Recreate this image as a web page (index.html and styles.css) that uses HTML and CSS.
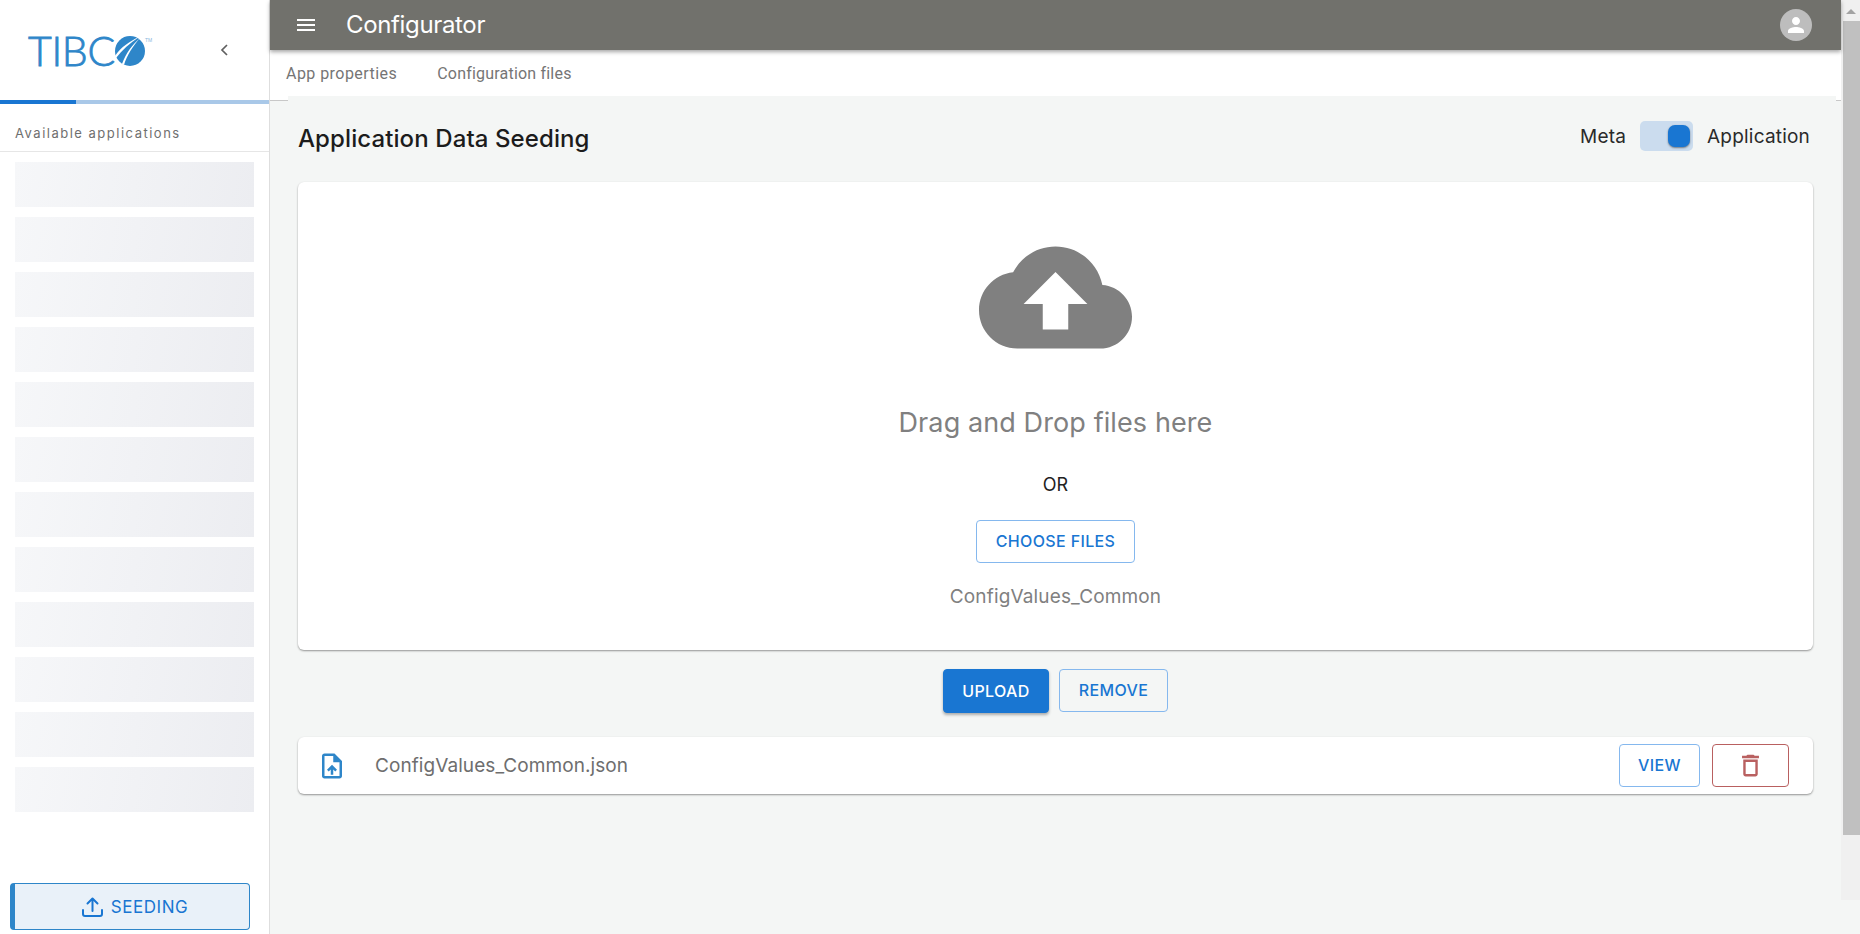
FILE: index.html
```
<!DOCTYPE html>
<html lang="en">
<head>
<meta charset="utf-8">
<title>Configurator</title>
<link rel="stylesheet" href="styles.css">
</head>
<body>
<div class="app">
  <aside class="sidebar">
    <div class="brand">
      <div class="logo">
        <span class="logo-text">TIBC</span>
        <svg class="logo-mark" viewBox="0 0 30 30"><circle cx="15" cy="15" r="15" fill="#2e86c9"/><path d="M24 1C15 5 6 11 0 20L1 22C7 14 15 7 24 1ZM25 2C17 9 11 17 7 28L9 29C12 19 18 10 25 2Z" fill="#fff"/></svg>
        <span class="logo-tm">TM</span>
      </div>
      <svg class="collapse" viewBox="0 0 8 12"><path d="M7 1L2 6l5 5" fill="none" stroke="#5f5f5f" stroke-width="1.7"/></svg>
    </div>
    <div class="progress"><div class="progress-fill"></div></div>
    <div class="avail">Available applications</div>
    <div class="skeletons">
      <div class="skeleton"></div><div class="skeleton"></div><div class="skeleton"></div><div class="skeleton"></div>
      <div class="skeleton"></div><div class="skeleton"></div><div class="skeleton"></div><div class="skeleton"></div>
      <div class="skeleton"></div><div class="skeleton"></div><div class="skeleton"></div><div class="skeleton"></div>
    </div>
    <button class="seeding">
      <svg class="seeding-icon" viewBox="0 0 21 20"><path d="M1 13v4a2 2 0 0 0 2 2h15a2 2 0 0 0 2-2v-4M10.500 14V1.500M5.500 6.500l5-5 5 5" fill="none" stroke="#1976d2" stroke-width="2" stroke-linecap="round" stroke-linejoin="round"/></svg>
      SEEDING
    </button>
  </aside>
  <main class="main">
    <header class="topbar">
      <svg class="menu" viewBox="0 0 24 24"><path d="M3 18h18v-2H3v2zm0-5h18v-2H3v2zm0-7v2h18V6H3z" fill="#fff"/></svg>
      <span class="topbar-title">Configurator</span>
      <span class="avatar"><svg viewBox="0 0 24 24"><path d="M12 12c2.210 0 4-1.790 4-4s-1.790-4-4-4-4 1.790-4 4 1.790 4 4 4zm0 2c-2.670 0-8 1.340-8 4v2h16v-2c0-2.660-5.330-4-8-4z" fill="#fff"/></svg></span>
    </header>
    <nav class="tabs">
      <span class="tab">App properties</span>
      <span class="tab">Configuration files</span>
    </nav>
    <section class="content">
      <div class="title-row">
        <h1 class="title">Application Data Seeding</h1>
        <div class="switch-row">
          <span>Meta</span>
          <span class="switch"><span class="knob"></span></span>
          <span>Application</span>
        </div>
      </div>
      <div class="card">
        <svg class="cloud" viewBox="0 0 24 24"><path d="M19.350 10.040C18.670 6.590 15.640 4 12 4 9.110 4 6.600 5.640 5.350 8.040 2.340 8.360 0 10.910 0 14c0 3.310 2.690 6 6 6h13c2.760 0 5-2.240 5-5 0-2.640-2.050-4.780-4.650-4.960zM14 13v4h-4v-4H7l5-5 5 5h-3z" fill="#808080"/></svg>
        <div class="drag">Drag and Drop files here</div>
        <div class="or">OR</div>
        <button class="btn btn-choose">CHOOSE FILES</button>
        <div class="filename">ConfigValues_Common</div>
      </div>
      <div class="actions">
        <button class="btn btn-primary">UPLOAD</button>
        <button class="btn btn-remove">REMOVE</button>
      </div>
      <div class="file-row">
        <svg class="file-icon" viewBox="0 0 24 24"><path d="M14 2H6c-1.100 0-1.990.9-1.990 2L4 20c0 1.100.89 2 1.990 2H18c1.100 0 2-.9 2-2V8l-6-6zm4 18H6V4h7v5h5v11zM8 15.010l1.410 1.410L11 14.840V19h2v-4.160l1.590 1.590L16 15.010 12.010 11 8 15.010z" fill="#2e86c9"/></svg>
        <span class="file-name">ConfigValues_Common.json</span>
        <button class="btn btn-view">VIEW</button>
        <button class="btn btn-delete"><svg viewBox="0 0 24 24"><path d="M6 19c0 1.100.9 2 2 2h8c1.100 0 2-.9 2-2V7H6v12zM8 9h8v10H8V9zm7.500-5l-1-1h-5l-1 1H5v2h14V4h-3.500z" fill="#b96060"/></svg></button>
      </div>
    </section>
  </main>
  <div class="scrollbar">
    <svg class="scroll-up" viewBox="0 0 10 5"><path d="M0 5L5 0l5 5z" fill="#a3a3a3"/></svg>
    <div class="scroll-thumb"></div>
  </div>
</div>
</body>
</html>
```
FILE: styles.css
```
* { box-sizing: border-box; }
html, body { margin: 0; height: 100%; overflow: hidden; }
body { background: #f4f6f5; font-family: Inter, "Noto Sans", sans-serif; color: #222; }
button { font-family: inherit; cursor: pointer; }

.app { display: flex; height: 934px; }

.sidebar { width: 270px; height: 934px; flex: none; display: flex; flex-direction: column; background: #fff; border-right: 1px solid #dedede; }
.brand { height: 100px; display: flex; align-items: center; padding: 1px 0 0 28px; }
.logo { display: flex; align-items: flex-start; width: 124px; height: 30px; color: #2e86c9; margin-top: 1px; }
.logo-text { font-family: Lato, sans-serif; font-weight: 300; font-size: 41px; line-height: 30px; letter-spacing: -.3px; width: 87px; flex: none; -webkit-text-stroke: .8px #2e86c9; }
.logo-mark { width: 30px; height: 30px; flex: none; }
.logo-tm { font-family: "Liberation Sans", sans-serif; font-size: 5px; line-height: 8px; color: #8ab8dd; }
.collapse { width: 8px; height: 12px; margin: -2px 0 0 68px; }
.progress { height: 4px; background: #a9c8e8; flex: none; }
.progress-fill { width: 76px; height: 4px; background: #1976d2; }
.avail { height: 48px; flex: none; padding: 20px 0 0 15px; font-size: 13px; line-height: 18px; letter-spacing: 1.5px; color: #6f6f6f; border-bottom: 1px solid #e6e6e6; }
.skeletons { display: flex; flex-direction: column; gap: 10px; padding: 10px 15px 0 15px; }
.skeleton { height: 45px; background: linear-gradient(100deg, #f6f7f9, #ecedf1); }
.seeding { margin: auto 0 4px 10px; width: 240px; height: 47px; flex: none; display: flex; align-items: center; justify-content: center; gap: 8px; padding: 0 0 0 6px; background: #e9f1f9; border: 1px solid #2e86c9; border-left-width: 5px; border-radius: 4px; color: #1976d2; font-size: 17px; letter-spacing: .55px; }
.seeding-icon { width: 21px; height: 20px; }

.main { width: 1571px; flex: none; display: flex; flex-direction: column; }
.topbar { height: 50px; flex: none; display: flex; align-items: center; background: #71716c; box-shadow: 0 2px 4px rgba(0,0,0,.35); position: relative; z-index: 2; padding-left: 24px; color: #fff; }
.menu { width: 24px; height: 24px; }
.topbar-title { margin: -2px 0 0 28px; font-size: 24px; letter-spacing: -.35px; }
.avatar { margin-left: auto; margin-right: 29px; width: 32px; height: 32px; border-radius: 50%; background: #bdbdbd; display: flex; align-items: center; justify-content: center; }
.avatar svg { width: 24px; height: 24px; }
.tabs { height: 51px; flex: none; display: flex; gap: 40px; padding: 15px 0 0 16px; background: #fff; border-bottom: 1px solid #c8c8c8; }
.tab { font-family: Roboto, sans-serif; font-size: 16px; line-height: 18px; color: #757575; letter-spacing: .45px; }
.tab + .tab { letter-spacing: .2px; }

.content { margin: -5px 5px 0 18px; flex: 1; background: #f4f6f5; padding: 0 23px 0 10px; position: relative; }
.title-row { height: 86px; display: flex; align-items: center; justify-content: space-between; padding: 0 3px 0 0; }
.title { margin: -2px 0 0; font-size: 24px; font-weight: 450; color: #1c1c1c; letter-spacing: .1px; }
.switch-row { display: flex; align-items: center; gap: 14px; font-size: 19px; letter-spacing: .2px; color: #2a2a2a; margin-top: -6px; }
.switch { width: 53px; height: 30px; background: #cbdcee; border-radius: 5px; display: flex; justify-content: flex-end; align-items: center; padding-right: 3px; }
.knob { width: 22px; height: 22px; border-radius: 7px; background: #1976d2; box-shadow: 0 1px 2px rgba(0,0,0,.45); }

.card { height: 468px; background: #fff; border-radius: 6px; box-shadow: 0 1px 2px rgba(0,0,0,.4); display: flex; flex-direction: column; align-items: center; }
.cloud { width: 153px; height: 153px; margin-top: 39px; }
.drag { margin-top: 33px; font-size: 27px; line-height: 32px; letter-spacing: .1px; color: #808080; }
.or { margin-top: 34px; font-size: 18px; line-height: 24px; letter-spacing: .1px; color: #222; }
.btn { height: 43px; border-radius: 4px; font-size: 16px; font-weight: 450; background: transparent; color: #1976d2; border: 1px solid #85b8ee; padding: 0 0 1px; letter-spacing: .35px; }
.btn-choose { margin-top: 23px; width: 159px; }
.filename { margin-top: 22px; font-size: 19px; line-height: 24px; letter-spacing: .15px; color: #808080; }
.actions { margin-top: 19px; display: flex; justify-content: center; gap: 10px; }
.btn-primary { width: 106px; height: 44px; background: #1976d2; border-color: #1976d2; color: #fff; font-weight: 550; box-shadow: 0 2px 3px rgba(0,0,0,.3); }
.btn-remove { width: 109px; }
.file-row { margin-top: 24px; height: 57px; background: #fff; border-radius: 6px; box-shadow: 0 1px 2px rgba(0,0,0,.4); display: flex; align-items: center; padding: 0 24px 0 19px; }
.file-icon { width: 30px; height: 30px; flex: none; }
.file-name { margin-left: 28px; font-size: 19px; letter-spacing: .07px; color: #6e6e6e; }
.btn-view { margin-left: auto; width: 81px; }
.btn-delete { margin-left: 12px; width: 77px; border-color: #b96060; display: flex; align-items: center; justify-content: center; }
.btn-delete svg { width: 29px; height: 29px; }

.scrollbar { width: 19px; height: 900px; flex: none; background: #f0f0f0; display: flex; flex-direction: column; align-items: flex-end; }
.scroll-up { width: 10px; height: 5px; margin: 9px 4px 7px 0; }
.scroll-thumb { width: 17px; height: 814px; background: #c0c0c0; }
```
